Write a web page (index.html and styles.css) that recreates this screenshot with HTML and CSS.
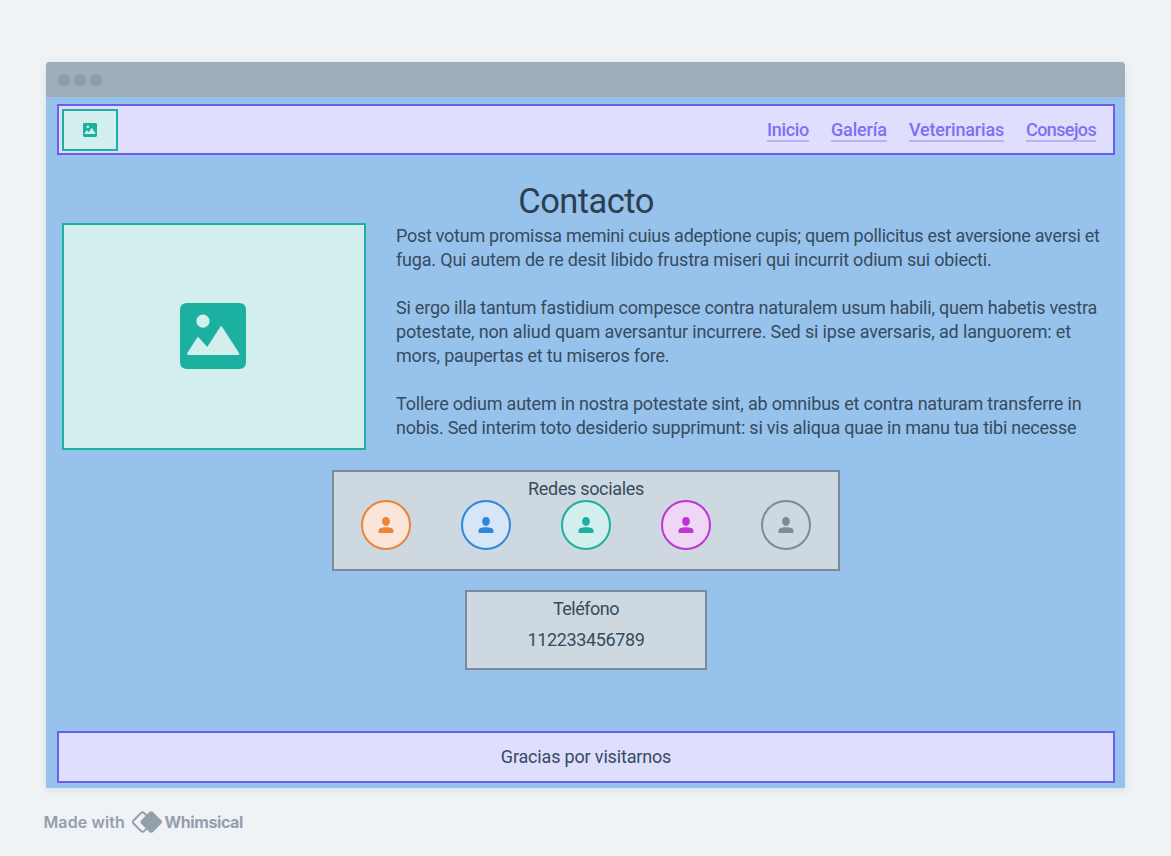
FILE: index.html
```
<!DOCTYPE html>
<html lang="es">
<head>
<meta charset="utf-8">
<title>Contacto</title>
<link rel="stylesheet" href="styles.css">
</head>
<body>
<svg class="defs" aria-hidden="true">
  <symbol id="picture" viewBox="0 0 66 66">
    <path fill="currentColor" fill-rule="evenodd" d="M7 0H59Q66 0 66 7V59Q66 66 59 66H7Q0 66 0 59V7Q0 0 7 0ZM23 11.5A6.6 6.6 0 1 0 23 24.7A6.6 6.6 0 1 0 23 11.5ZM8.2 52H58Q60 52 59 50L42.2 24Q41.2 22.700 40.200 24L27.200 44L18.800 34.600Q17.800 33.700 16.900 35L7.300 50Q6.500 52 8.200 52Z"/>
  </symbol>
  <symbol id="person" viewBox="0 0 16 16">
    <path fill="currentColor" d="M8 0C10.400 0 11.900 1.700 11.900 4.200S10.300 8.900 8 8.900S4.100 6.700 4.100 4.200S5.600 0 8 0ZM.5 15.200V14C.5 11 4 10.300 8 10.300S15.500 11 15.500 14V15.200Q15.500 16 14.700 16H1.300Q.5 16 .5 15.200Z"/>
  </symbol>
</svg>
<div class="window">
  <div class="titlebar"><i></i><i></i><i></i></div>
  <div class="page">
    <header class="header">
      <div class="logo"><svg><use href="#picture"/></svg></div>
      <nav class="nav">
        <a class="inicio">Inicio</a><a class="galeria">Galería</a><a class="veterinarias">Veterinarias</a><a class="consejos">Consejos</a>
      </nav>
    </header>
    <h1 class="title">Contacto</h1>
    <section class="intro">
      <div class="photo"><svg><use href="#picture"/></svg></div>
      <div class="copy">
        <p><span class="l1">Post votum promissa memini cuius adeptione cupis; quem pollicitus est aversione aversi et</span><span class="l2">fuga. Qui autem de re desit libido frustra miseri qui incurrit odium sui obiecti.</span></p>
        <p><span class="l3">Si ergo illa tantum fastidium compesce contra naturalem usum habili, quem habetis vestra</span><span class="l4">potestate, non aliud quam aversantur incurrere. Sed si ipse aversaris, ad languorem: et</span><span class="l5">mors, paupertas et tu miseros fore.</span></p>
        <p><span class="l6">Tollere odium autem in nostra potestate sint, ab omnibus et contra naturam transferre in</span><span class="l7">nobis. Sed interim toto desiderio supprimunt: si vis aliqua quae in manu tua tibi necesse</span></p>
      </div>
    </section>
    <section class="social">
      <h2 class="redes">Redes sociales</h2>
      <div class="avatars">
        <div class="avatar orange"><svg><use href="#person"/></svg></div>
        <div class="avatar blue"><svg><use href="#person"/></svg></div>
        <div class="avatar green"><svg><use href="#person"/></svg></div>
        <div class="avatar pink"><svg><use href="#person"/></svg></div>
        <div class="avatar gray"><svg><use href="#person"/></svg></div>
      </div>
    </section>
    <section class="phone">
      <h2 class="tel">Teléfono</h2>
      <p class="number">112233456789</p>
    </section>
    <footer class="footer"><span class="thanks">Gracias por visitarnos</span></footer>
  </div>
</div>
<div class="credit">
  <span class="made">Made with</span>
  <svg class="mark" viewBox="0 0 30 22"><path d="M9.200 1.900Q10.600.6 12 1.900L20 9.500Q21.200 11 20 12.500L12 20.100Q10.600 21.400 9.200 20.100L1.500 12.500Q.4 11 1.500 9.500Z" fill="none" stroke="#939fab" stroke-width="2"/><path d="M17.700.8Q19.200-.5 20.700.8L29.200 9.300Q30.800 11 29.200 12.700L20.700 21.200Q19.200 22.500 17.700 21.200L9.200 12.700Q7.600 11 9.200 9.300Z" fill="#939fab"/></svg>
  <span class="brand">Whimsical</span>
</div>
</body>
</html>
```
FILE: styles.css
```
* { box-sizing: border-box; }
body {
  margin: 0;
  width: 1171px;
  height: 856px;
  padding: 62px 0 0 45.5px;
  overflow: hidden;
  background: #eff3f6;
  color: #364b5d;
  font-family: Roboto, "Liberation Sans", sans-serif;
  font-size: 18px;
  line-height: 24px;
}
.defs { display: none; }
h1, h2, p { margin: 0; font-weight: 400; font-size: inherit; }
.window {
  width: 1079.5px;
  height: 726px;
  border-radius: 4px 4px 0 0;
  background: #96c2ec;
  box-shadow: 0 2px 8px rgba(60, 80, 100, .12);
}
.titlebar {
  display: flex;
  align-items: center;
  gap: 4px;
  height: 35px;
  padding-left: 12px;
  border-radius: 4px 4px 0 0;
  background: #9eadba;
}
.titlebar i { width: 12px; height: 12px; border-radius: 50%; background: #8d9dac; }
.page {
  display: flex;
  flex-direction: column;
  height: 691px;
  padding: 7px 10px 5px 11.5px;
}
.header {
  display: flex;
  justify-content: space-between;
  height: 51px;
  padding: 3px 17px 0 3px;
  border: 2px solid #6a5df0;
  background: #dfdefd;
}
.logo, .photo {
  display: flex;
  align-items: center;
  justify-content: center;
  border: 2px solid #1cb0a0;
  background: #d2efed;
  color: #1cb0a0;
}
.logo { width: 56px; height: 42px; }
.logo svg { width: 14px; height: 14px; margin: 0 1px 1px 0; }
.nav { display: flex; gap: 22px; padding-top: 9px; color: #7c70f5; font-weight: 500; }
.nav a { height: 24px; border-bottom: 2px solid #b9b2fa; white-space: nowrap; }
.inicio { width: 42px; letter-spacing: -.35px; }
.galeria { width: 56px; letter-spacing: -.15px; }
.veterinarias { width: 95px; letter-spacing: -.17px; }
.consejos { width: 70px; letter-spacing: -.6px; }
.title {
  margin-top: 24px;
  height: 44px;
  text-align: center;
  color: #2b3f4f;
  font-size: 34.5px;
  line-height: 44px;
  letter-spacing: -.55px;
}
.intro { display: flex; gap: 30px; padding-left: 5px; }
.photo { flex: none; width: 304px; height: 227px; }
.photo svg { width: 66px; height: 66px; margin: 0 1.5px 1.5px 0; }
.copy { display: flex; flex-direction: column; gap: 24px; padding-top: 1px; }
.copy span { display: block; white-space: nowrap; }
.l1 { letter-spacing: -.27px; }
.l2 { letter-spacing: -.185px; }
.l3 { letter-spacing: -.22px; }
.l4 { letter-spacing: -.14px; }
.l5 { letter-spacing: -.21px; }
.l6 { letter-spacing: -.2px; }
.l7 { letter-spacing: -.22px; }
.social, .phone {
  align-self: center;
  border: 2px solid #7b8b99;
  background: #cdd8e0;
  text-align: center;
}
.social { width: 508px; height: 101px; margin-top: 20px; padding-top: 5px; }
.redes { height: 23px; letter-spacing: -.33px; }
.avatars { display: flex; justify-content: center; gap: 50px; padding-right: 1px; }
.avatar {
  display: flex;
  align-items: center;
  justify-content: center;
  width: 50px;
  height: 50px;
  border: 2px solid;
  border-radius: 50%;
}
.avatar svg { width: 16px; height: 16px; }
.orange { color: #ea8439; background: #f9e5d9; }
.blue { color: #2d88db; background: #d6e6f7; }
.green { color: #1cb0a0; background: #d2efed; }
.pink { color: #bf35d2; background: #f0d6f5; }
.gray { color: #7b8b99; background: #cdd8e0; }
.phone { width: 242px; height: 80px; margin-top: 19px; padding-top: 5px; }
.tel { letter-spacing: -.5px; }
.number { margin-top: 7px; letter-spacing: -.35px; }
.thanks { letter-spacing: -.17px; }
.footer {
  display: flex;
  align-items: center;
  justify-content: center;
  height: 52px;
  margin-top: auto;
  border: 2px solid #6a5df0;
  background: #dfdefd;
}
.credit {
  display: flex;
  align-items: center;
  height: 24px;
  margin: 22px 0 0 -2px;
  color: #939fab;
  font-family: Inter, sans-serif;
  font-size: 16px;
  font-weight: 600;
}
.made { width: 88px; letter-spacing: .1px; }
.mark { width: 30px; height: 22px; margin-right: 3px; }
.brand { font-weight: 700; letter-spacing: -.4px; }
```
